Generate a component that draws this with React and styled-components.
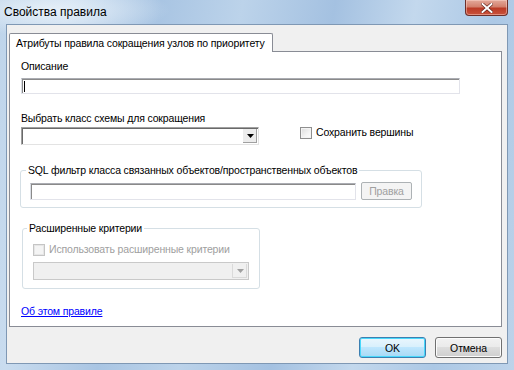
import React from "react";
import styled, { createGlobalStyle } from "styled-components";

const Global = createGlobalStyle`
  html, body { margin: 0; padding: 0; overflow: hidden; }
  body { font-family: "Liberation Sans", Arial, sans-serif; font-size: 10.5px; letter-spacing: -0.15px; color: #000; }
`;

const Window = styled.div`
  width: 514px;
  height: 370px;
  display: flex;
  flex-direction: column;
  box-sizing: border-box;
  background:
    radial-gradient(ellipse 120px 26px at 50px 10px, rgba(235,243,250,0.85), rgba(235,243,250,0) 100%),
    linear-gradient(100deg, #bed4ea 0%, #c9dcef 12%, #a9c5e3 28%, #bcd3ea 42%, #a4c1e1 58%, #c3d8ed 72%, #acc8e5 86%, #bdd3ea 100%);
`;

const TitleBar = styled.div`
  height: 24px;
  display: flex;
  align-items: flex-start;
  justify-content: space-between;
  padding: 0 6px 0 4px;
  flex-shrink: 0;
`;

const Title = styled.span`
  font-size: 12px;
  letter-spacing: 0;
  line-height: 12px;
  margin-top: 6px;
  color: #000;
`;

const CloseBtn = styled.div`
  width: 43px;
  height: 16px;
  box-sizing: border-box;
  border: 1px solid #6d2f2a;
  border-top: none;
  border-radius: 0 0 4px 4px;
  background: linear-gradient(#e3a99a 0%, #d3806d 45%, #bb3b26 55%, #c9523c 100%);
  box-shadow: inset 0 0 0 1px rgba(255,220,210,0.45);
  display: flex;
  align-items: center;
  justify-content: center;
`;

const Client = styled.div`
  flex: 1;
  margin: 0 6px 6px 6px;
  border: 1px solid #7f98b4;
  background: #f0f0f0;
  display: flex;
  flex-direction: column;
  padding: 8px 5px 5px 2px;
  min-height: 0;
`;

const TabStrip = styled.div`
  display: flex;
  position: relative;
  z-index: 1;
  margin-bottom: -1px;
`;

const Tab = styled.div`
  height: 19px;
  box-sizing: border-box;
  border: 1px solid #898c95;
  border-bottom: none;
  background: #fff;
  padding: 0 0 0 6px;
  width: 264px;
  line-height: 18px;
  white-space: nowrap;
  border-radius: 2px 2px 0 0;
`;

const Pane = styled.div`
  flex: 1;
  border: 1px solid #898c95;
  background: #fff;
  display: flex;
  flex-direction: column;
  padding: 8px 0 0 11px;
  min-height: 0;
`;

const Label = styled.div`
  line-height: 13px;
  white-space: nowrap;
  color: ${(p) => (p.$disabled ? "#a0a0a0" : "#000")};
`;

const TextBox = styled.div`
  box-sizing: border-box;
  width: ${(p) => p.$w}px;
  height: ${(p) => p.$h || 16}px;
  margin-top: ${(p) => p.$mt || 0}px;
  border: 1px solid #e2e3ea;
  border-top-color: #abadb3;
  border-left-color: #dbdfe6;
  background: #fff;
  box-shadow: inset 1px 1px 0 #8a8a8a;
  display: flex;
  align-items: center;
  padding-left: 2px;
`;

const Caret = styled.span`
  width: 1px;
  height: 11px;
  background: #000;
`;

const Combo = styled.div`
  box-sizing: border-box;
  width: ${(p) => p.$w}px;
  height: 18px;
  margin-top: ${(p) => p.$mt || 0}px;
  border: 1px solid ${(p) => (p.$disabled ? "#c9c9c9" : "#e3e3e3")};
  border-top-color: ${(p) => (p.$disabled ? "#c9c9c9" : "#a0a0a0")};
  border-left-color: ${(p) => (p.$disabled ? "#c9c9c9" : "#a0a0a0")};
  box-shadow: ${(p) => (p.$disabled ? "none" : "inset 1px 1px 0 #696969")};
  background: ${(p) => (p.$disabled ? "#f0f0f0" : "#fff")};
  display: flex;
  justify-content: flex-end;
  align-items: stretch;
  padding: 1px;
`;

const DropBtn = styled.div`
  width: 15px;
  box-sizing: border-box;
  background: ${(p) => (p.$disabled ? "#f0f0f0" : "#ececec")};
  border-left: 1px solid ${(p) => (p.$disabled ? "#dadada" : "#fff")};
  box-shadow: ${(p) => (p.$disabled ? "inset -1px -1px 0 #dadada" : "inset -1px -1px 0 #a0a0a0")};
  display: flex;
  align-items: center;
  justify-content: center;
`;

const Row = styled.div`
  display: flex;
  align-items: ${(p) => p.$align || "center"};
  gap: ${(p) => p.$gap || 0}px;
  margin-top: ${(p) => p.$mt || 0}px;
`;

const Col = styled.div`
  display: flex;
  flex-direction: column;
`;

const CheckWrap = styled.label`
  display: flex;
  align-items: center;
  gap: 4px;
  white-space: nowrap;
  margin: ${(p) => p.$m || 0};
  color: ${(p) => (p.$disabled ? "#a0a0a0" : "#000")};
  line-height: 13px;
`;

const Box = styled.span`
  width: 12px;
  height: 12px;
  box-sizing: border-box;
  flex-shrink: 0;
  border: 1px solid ${(p) => (p.$disabled ? "#c5c5c5" : "#8f8f8f")};
  background: ${(p) =>
    p.$disabled
      ? "#f4f4f4"
      : "linear-gradient(135deg, #dcdcdc 0%, #f4f4f4 60%, #fff 100%)"};
  box-shadow: inset 0 0 0 1px ${(p) => (p.$disabled ? "#e6e6e6" : "#f4f4f4")};
`;

const Group = styled.fieldset`
  margin: ${(p) => p.$m || 0};
  width: ${(p) => p.$w}px;
  box-sizing: border-box;
  border: 1px solid #d5dfe5;
  border-radius: 3px;
  padding: ${(p) => p.$pad};
  min-width: 0;
`;

const Legend = styled.legend`
  padding: 0 2px;
  margin-left: ${(p) => p.$ml}px;
  line-height: 13px;
  white-space: nowrap;
`;

const SmallButton = styled.div`
  box-sizing: border-box;
  width: 51px;
  height: 18px;
  border: 1px solid #adb2b5;
  border-radius: 2px;
  background: #f4f4f4;
  color: #a0a0a0;
  display: flex;
  align-items: center;
  justify-content: center;
`;

const Link = styled.a`
  color: #0000ff;
  text-decoration: underline;
  line-height: 13px;
  margin-top: 16px;
  align-self: flex-start;
  cursor: pointer;
`;

const ButtonRow = styled.div`
  display: flex;
  justify-content: flex-end;
  gap: 9px;
  margin-top: 10px;
`;

const DlgButton = styled.div`
  box-sizing: border-box;
  width: 67px;
  height: 21px;
  border-radius: 3px;
  border: 1px solid ${(p) => (p.$default ? "#3c7fb1" : "#707070")};
  background: ${(p) =>
    p.$default
      ? "linear-gradient(#eaf6fd 0%, #d9f0fc 45%, #bee6fd 50%, #a7d9f5 100%)"
      : "linear-gradient(#f2f2f2 0%, #ebebeb 45%, #dddddd 50%, #cfcfcf 100%)"};
  box-shadow: ${(p) =>
    p.$default ? "inset 0 0 0 1px #48d8fb" : "inset 0 0 0 1px #fcfcfc"};
  display: flex;
  align-items: center;
  justify-content: center;
`;

const Arrow = ({ color }) => (
  <svg width="7" height="4" viewBox="0 0 7 4">
    <path d="M0 0H7L3.5 4Z" fill={color} />
  </svg>
);

export default function App() {
  return (
    <>
      <Global />
      <Window>
        <TitleBar>
          <Title>Свойства правила</Title>
          <CloseBtn>
            <svg width="12" height="10" viewBox="0 0 12 10">
              <path
                d="M1.5 1 L10.5 9 M10.5 1 L1.5 9"
                stroke="#5a1d15"
                strokeWidth="3.2"
                strokeLinecap="square"
              />
              <path
                d="M1.5 1 L10.5 9 M10.5 1 L1.5 9"
                stroke="#fff"
                strokeWidth="2"
                strokeLinecap="square"
              />
            </svg>
          </CloseBtn>
        </TitleBar>
        <Client>
          <TabStrip>
            <Tab>Атрибуты правила сокращения узлов по приоритету</Tab>
          </TabStrip>
          <Pane>
            <Label>Описание</Label>
            <TextBox $w={439} $mt={5}>
              <Caret />
            </TextBox>
            <Row $align="flex-end" $mt={18}>
              <Col>
                <Label>Выбрать класс схемы для сокращения</Label>
                <Combo $w={238} $mt={2}>
                  <DropBtn>
                    <Arrow color="#000" />
                  </DropBtn>
                </Combo>
              </Col>
              <CheckWrap $m="0 0 6px 41px">
                <Box />
                Сохранить вершины
              </CheckWrap>
            </Row>
            <Group $w={402} $m="19px 0 0 -1px" $pad="5px 9px 7px 9px">
              <Legend $ml={-4}>
                SQL фильтр класса связанных объектов/пространственных объектов
              </Legend>
              <Row $gap={5}>
                <TextBox $w={326} $h={17} />
                <SmallButton>Правка</SmallButton>
              </Row>
            </Group>
            <Group $w={238} $m="14px 0 0 1px" $pad="8px 9px 8px 10px">
              <Legend $ml={-6}>Расширенные критерии</Legend>
              <CheckWrap $disabled>
                <Box $disabled />
                Использовать расширенные критерии
              </CheckWrap>
              <Combo $w={216} $mt={6} $disabled>
                <DropBtn $disabled>
                  <Arrow color="#a0a0a0" />
                </DropBtn>
              </Combo>
            </Group>
            <Link>Об этом правиле</Link>
          </Pane>
          <ButtonRow>
            <DlgButton $default>OK</DlgButton>
            <DlgButton>Отмена</DlgButton>
          </ButtonRow>
        </Client>
      </Window>
    </>
  );
}
